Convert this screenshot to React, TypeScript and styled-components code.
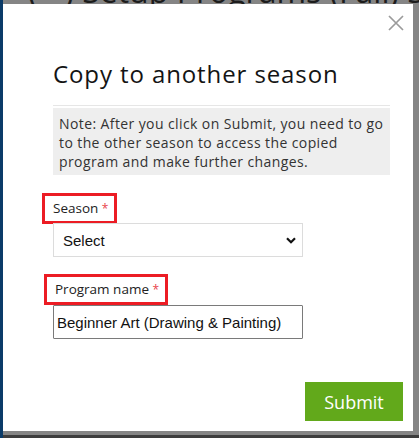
import styled, { createGlobalStyle } from 'styled-components';

const GlobalStyle = createGlobalStyle`
    html, body {
        margin: 0;
        padding: 0;
    }
    body {
        width: 419px;
        height: 438px;
        overflow: hidden;
        background: linear-gradient(to bottom, #858585 435px, #3d3d3d 435px);
        font-family: "Open Sans", "Liberation Sans", sans-serif;
    }
`;

const Page = styled.div`
    height: 438px;
    border-left: 3px solid #0b3b68;
    display: flex;
    flex-direction: column;
`;

const BehindStrip = styled.div`
    height: 4px;
    overflow: hidden;
    display: flex;
    align-items: flex-end;
    padding-left: 25px;
    white-space: nowrap;
`;

const BehindText = styled.span`
    font-family: "Open Sans", sans-serif;
    font-size: 32px;
    line-height: 32px;
    color: #1c1c1c;
    margin-bottom: -3px;
`;

const Modal = styled.div`
    width: 410px;
    height: 427px;
    background: #fff;
    display: flex;
    flex-direction: column;
    box-sizing: border-box;
`;

const Header = styled.div`
    height: 40px;
    display: flex;
    justify-content: flex-end;
    align-items: flex-start;
    padding: 11px 9px 0 0;
    box-sizing: border-box;
`;

const CloseButton = styled.button`
    width: 16px;
    height: 16px;
    padding: 0;
    border: 0;
    background: none;
    cursor: pointer;
    display: flex;
`;

const Body = styled.div`
    padding: 0 23px 0 50px;
    display: flex;
    flex-direction: column;
    align-items: flex-start;
`;

const Title = styled.h2`
    margin: 14px 0 0;
    font-size: 24px;
    line-height: 32px;
    font-weight: 400;
    color: #141414;
    letter-spacing: 0.9px;
`;

const Divider = styled.hr`
    align-self: stretch;
    margin: 15px 0 0;
    border: 0;
    border-top: 1px solid #e6e6e6;
`;

const Note = styled.div`
    align-self: stretch;
    margin-top: 2px;
    padding: 6px 6px 4px;
    background: #eeeeee;
    font-size: 14px;
    line-height: 19px;
    letter-spacing: 0.4px;
    color: #333;
    white-space: nowrap;
`;

const Label = styled.label<{ $top: number; $left: number }>`
    margin: ${p => p.$top}px 0 0 ${p => p.$left}px;
    border: 3px solid #ec1c24;
    padding: 0 6px 0 8px;
    font-size: 13.5px;
    line-height: 24px;
    color: #222;
`;

const Req = styled.span`
    color: #e8434b;
    font-size: 12px;
`;

const SelectWrap = styled.div`
    position: relative;
    margin-top: -1px;
`;

const Select = styled.select`
    appearance: none;
    width: 250px;
    height: 34px;
    border: 1px solid #dcdcdc;
    border-radius: 0;
    background: #fff;
    padding: 0 9px;
    font-family: "Liberation Sans", Arial, sans-serif;
    font-size: 15px;
    color: #111;
    outline: none;
`;

const Chevron = styled.svg`
    position: absolute;
    right: 7px;
    top: 14px;
    pointer-events: none;
`;

const Input = styled.input`
    width: 250px;
    height: 34px;
    box-sizing: border-box;
    border: 1px solid #7a7a7a;
    border-radius: 1px;
    padding: 0 3px;
    font-family: "Liberation Sans", Arial, sans-serif;
    font-size: 15px;
    color: #111;
    outline: none;
`;

const Footer = styled.div`
    margin-top: auto;
    display: flex;
    justify-content: flex-end;
    padding: 0 10px 10px 0;
`;

const SubmitButton = styled.button`
    width: 98px;
    height: 39px;
    border: 0;
    background: #62a91b;
    color: #fff;
    font-family: "Open Sans", sans-serif;
    font-size: 18px;
    cursor: pointer;
`;

export default function App() {
    return (
        <>
            <GlobalStyle/>
            <Page>
                <BehindStrip>
                    <BehindText>(✓) Setup Programs (Fall) Season</BehindText>
                </BehindStrip>
                <Modal>
                    <Header>
                        <CloseButton aria-label="Close">
                            <svg width="16" height="16" viewBox="0 0 16 16">
                                <path d="M1 1 L15 15 M15 1 L1 15" stroke="#9b9b9b" strokeWidth="1.7"/>
                            </svg>
                        </CloseButton>
                    </Header>
                    <Body>
                        <Title>Copy to another season</Title>
                        <Divider/>
                        <Note>
                            Note: After you click on Submit, you need to go<br/>
                            to the other season to access the copied<br/>
                            program and make further changes.
                        </Note>
                        <Label $top={18} $left={-11}>Season <Req>*</Req></Label>
                        <SelectWrap>
                            <Select defaultValue="">
                                <option value="">Select</option>
                            </Select>
                            <Chevron width="10" height="7" viewBox="0 0 10 7">
                                <path d="M1 1.2 L5 5.2 L9 1.2" stroke="#111" strokeWidth="2.2" fill="none"/>
                            </Chevron>
                        </SelectWrap>
                        <Label $top={17} $left={-9}>Program name <Req>*</Req></Label>
                        <Input defaultValue="Beginner Art (Drawing & Painting)"/>
                    </Body>
                    <Footer>
                        <SubmitButton>Submit</SubmitButton>
                    </Footer>
                </Modal>
            </Page>
        </>
    );
}
